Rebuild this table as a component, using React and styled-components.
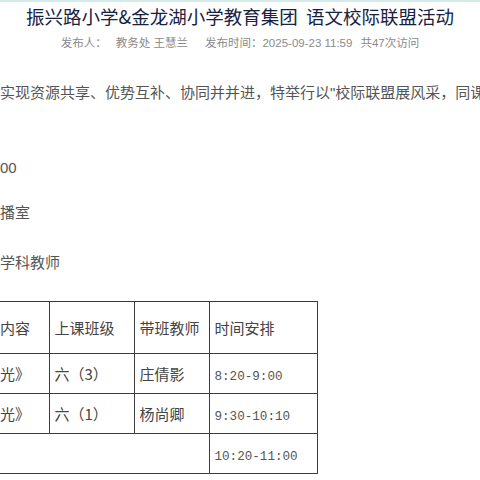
import React from 'react';
import styled, { createGlobalStyle } from 'styled-components';

const GlobalStyle = createGlobalStyle`
  html, body {
    margin: 0;
    padding: 0;
    background: #fff;
  }
  body {
    font-family: "Noto Sans CJK SC", "Noto Sans", sans-serif;
  }
`;

const Page = styled.div`
  width: 480px;
  height: 480px;
  overflow: hidden;
  background: #fff;
`;

const TopStrip = styled.div`
  height: 2px;
  background: #d3ecea;
`;

const Title = styled.h1`
  margin: 0;
  padding-top: 1px;
  font-size: 18.5px;
  line-height: 26px;
  font-weight: 400;
  color: #18223f;
  text-align: center;
  white-space: nowrap;
`;

const Meta = styled.div`
  margin-top: 6px;
  display: flex;
  justify-content: center;
  gap: 17px;
  font-family: "Liberation Sans", "Noto Sans CJK SC", sans-serif;
  font-size: 11.5px;
  line-height: 16px;
  color: #8a8a8a;
  white-space: nowrap;
`;

const MetaGroup = styled.span`
  display: flex;
  gap: ${props => props.$gap}px;
`;

const Line = styled.p`
  margin: ${props => props.$top}px 0 0;
  font-family: "Liberation Sans", "Noto Sans CJK SC", sans-serif;
  font-size: 15px;
  line-height: 24px;
  color: #555;
  white-space: nowrap;
`;

const Table = styled.table`
  margin-top: 26px;
  border-collapse: collapse;
  table-layout: fixed;
  font-size: 15px;
  color: #444;
`;

const HeadCell = styled.td`
  height: 51px;
  padding: 0 0 0 ${props => props.$pad ?? 5}px;
  border: 1px solid #3c3c3c;
  ${props => props.$first && 'border-left: none;'}
  vertical-align: middle;
  white-space: nowrap;
`;

const Cell = styled.td`
  height: 39px;
  padding: 0 0 0 ${props => props.$pad ?? 5}px;
  border: 1px solid #3c3c3c;
  ${props => props.$first && 'border-left: none;'}
  vertical-align: middle;
  white-space: nowrap;
`;

const Time = styled.span`
  font-family: "Liberation Mono", "DejaVu Sans Mono", monospace;
  font-size: 12.6px;
  color: #555;
`;

const rows = [
  { topic: '光》', cls: '六（3）', teacher: '庄倩影', time: '8:20-9:00' },
  { topic: '光》', cls: '六（1）', teacher: '杨尚卿', time: '9:30-10:10' }
];

const App = () => (
  <Page>
    <GlobalStyle />
    <TopStrip />
    <Title>振兴路小学&amp;金龙湖小学教育集团&nbsp; 语文校际联盟活动</Title>
    <Meta>
      <MetaGroup $gap={9}>
        <span>发布人：</span>
        <span>教务处 王慧兰</span>
      </MetaGroup>
      <MetaGroup $gap={8}>
        <span>发布时间：2025-09-23 11:59</span>
        <span>共47次访问</span>
      </MetaGroup>
    </Meta>
    <Line $top={30}>实现资源共享、优势互补、协同并并进，特举行以"校际联盟展风采，同课异构</Line>
    <Line $top={51}>00</Line>
    <Line $top={21}>播室</Line>
    <Line $top={26}>学科教师</Line>
    <Table>
      <colgroup>
        <col style={{ width: 49 }} />
        <col style={{ width: 85 }} />
        <col style={{ width: 75 }} />
        <col style={{ width: 108 }} />
      </colgroup>
      <tbody>
        <tr>
          <HeadCell $first $pad={0}>内容</HeadCell>
          <HeadCell>上课班级</HeadCell>
          <HeadCell>带班教师</HeadCell>
          <HeadCell>时间安排</HeadCell>
        </tr>
        {rows.map((r, idx) => (
          <tr key={idx}>
            <Cell $first $pad={0}>{r.topic}</Cell>
            <Cell>{r.cls}</Cell>
            <Cell>{r.teacher}</Cell>
            <Cell><Time>{r.time}</Time></Cell>
          </tr>
        ))}
        <tr>
          <Cell $first colSpan={3} />
          <Cell><Time>10:20-11:00</Time></Cell>
        </tr>
      </tbody>
    </Table>
  </Page>
);

export default App;
